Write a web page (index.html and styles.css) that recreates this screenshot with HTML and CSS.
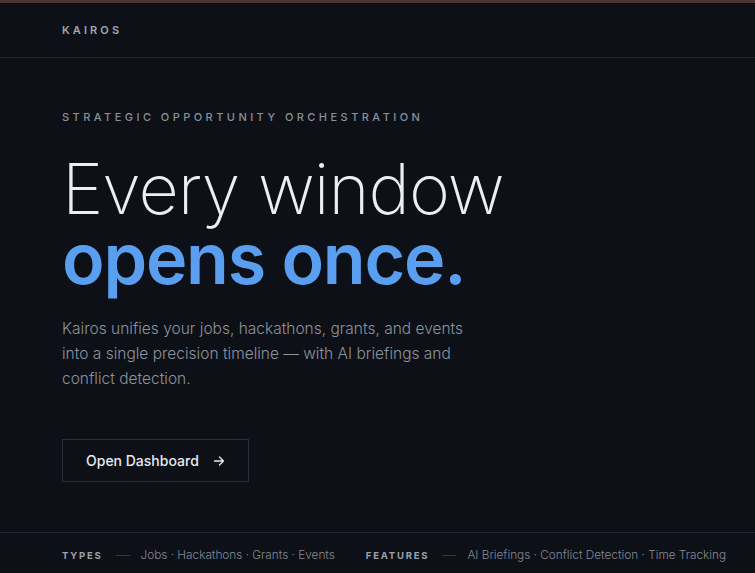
FILE: index.html
```html
<!DOCTYPE html>
<html lang="en">
<head>
<meta charset="utf-8">
<title>Kairos</title>
<link rel="stylesheet" href="styles.css">
</head>
<body>
<div class="topline"></div>
<header class="header">
  <div class="brand">KAIROS</div>
</header>
<main class="hero">
  <p class="eyebrow">STRATEGIC OPPORTUNITY ORCHESTRATION</p>
  <h1 class="title">
    <span class="title-light">Every window</span>
    <span class="title-accent">opens once.</span>
  </h1>
  <p class="lead">Kairos unifies your jobs, hackathons, grants, and events into a single precision timeline — with AI briefings and conflict detection.</p>
  <a class="cta" href="#">Open Dashboard <span class="arrow"><svg width="12" height="12" viewBox="0 0 12 12" fill="none" stroke="currentColor" stroke-width="1.3" stroke-linecap="round" stroke-linejoin="round"><path d="M1.5 6h9M6.5 2l4 4-4 4"/></svg></span></a>
</main>
<footer class="footer">
  <div class="group">
    <span class="label">TYPES</span>
    <span class="dash"></span>
    <span class="items">Jobs · Hackathons · Grants · Events</span>
  </div>
  <div class="group">
    <span class="label">FEATURES</span>
    <span class="dash"></span>
    <span class="items">AI Briefings · Conflict Detection · Time Tracking</span>
  </div>
</footer>
</body>
</html>
```
FILE: styles.css
```css
* { box-sizing: border-box; }
html, body { margin: 0; padding: 0; }
body {
  background: #0d1017;
  font-family: "Inter", "Liberation Sans", sans-serif;
  color: #e6e8ec;
  height: 573px;
  overflow: hidden;
  display: flex;
  flex-direction: column;
}
.topline { height: 3px; background: #4a3434; }
.header {
  height: 55px;
  border-bottom: 1px solid #232630;
  display: flex;
  align-items: center;
  padding: 0 62px;
}
.brand {
  font-size: 11px;
  font-weight: 600;
  letter-spacing: 3.1px;
  color: #a0a6b3;
}
.hero {
  flex: 1;
  padding: 51px 62px 0;
}
.eyebrow {
  margin: 0;
  font-size: 11px;
  font-weight: 500;
  letter-spacing: 3.45px;
  color: #8b909a;
  line-height: 16px;
}
.title {
  margin: 29px 0 0;
  font-weight: 300;
  font-size: 70px;
  line-height: 70px;
  letter-spacing: -1px;
}
.title span { display: block; }
.title-light { color: #eceef1; font-weight: 200; }
.title-accent { color: #5a9ef0; font-weight: 600; letter-spacing: -1.2px; }
.lead {
  margin: 22px 0 0;
  width: 420px;
  font-size: 15.5px;
  line-height: 25px;
  font-weight: 300;
  color: #8e939d;
}
.cta {
  margin-top: 48px;
  display: inline-flex;
  align-items: center;
  gap: 14px;
  height: 43px;
  padding: 0 23px;
  border: 1px solid #2b2e37;
  color: #e8eaee;
  text-decoration: none;
  font-size: 14px;
  font-weight: 500;
}
.arrow { display: inline-flex; }
.footer {
  height: 41px;
  border-top: 1px solid #232630;
  display: flex;
  align-items: center;
  gap: 31px;
  padding: 4px 62px 0;
  white-space: nowrap;
}
.group { display: flex; align-items: center; }
.label {
  font-size: 9.5px;
  font-weight: 700;
  letter-spacing: 1.8px;
  color: #9ca1ad;
  margin-right: 13px;
}
.dash { width: 14px; height: 1px; background: #343741; margin-right: 11px; }
.items {
  font-size: 11.8px;
  font-weight: 300;
  color: #848a95;
}
```
